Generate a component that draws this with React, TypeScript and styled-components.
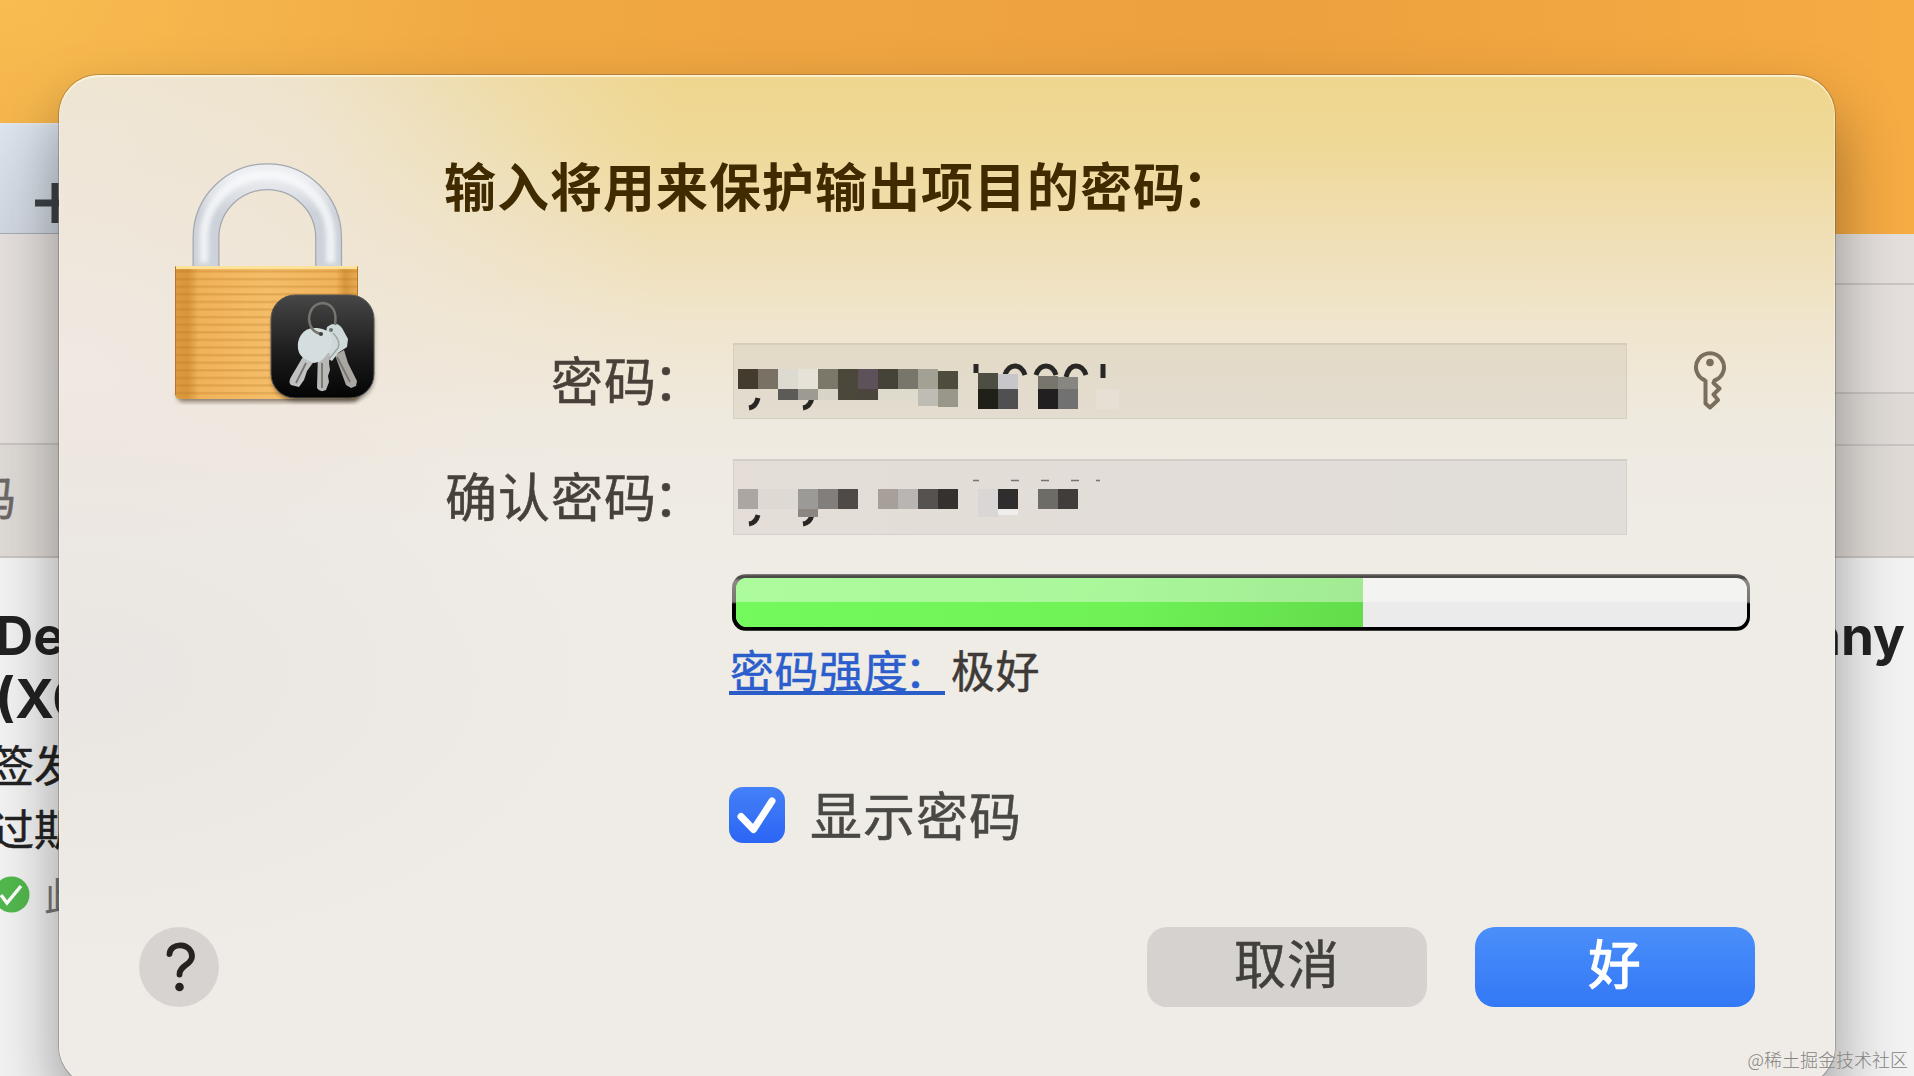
import React from 'react';
import styled, { createGlobalStyle, css } from 'styled-components';

const cjk = `"Noto Sans CJK SC", sans-serif`;

const GlobalStyle = createGlobalStyle`
  * { box-sizing: border-box; }
  body { margin: 0; overflow: hidden; font-family: ${cjk}; }
`;

const Desktop = styled.main`
  position: relative;
  width: 1914px;
  height: 1076px;
  overflow: hidden;
  background:
    radial-gradient(ellipse 500px 300px at 0 0, #f8bc50 0%, rgba(248, 188, 80, 0) 100%),
    linear-gradient(90deg, #f1ad48 0%, #f0a843 30%, #eda13f 65%, #f6ab43 100%);
`;

const BackWindow = styled.section<{ $side: 'left' | 'right' }>`
  position: absolute;
  top: ${p => (p.$side === 'left' ? 123 : 234)}px;
  bottom: 0;
  width: 200px;
  display: flex;
  flex-direction: column;
  overflow: hidden;
  ${p => (p.$side === 'left' ? css`left: 0;` : css`right: 0;`)}
`;

const TabStrip = styled.div`
  height: 111px;
  padding: 58px 0 0 35px;
  border-top: 2px solid #e3e6ea;
  border-bottom: 1px solid #a7acb2;
  background: linear-gradient(160deg, #dce4ed, #c8ced6);
`;

const ToolRow = styled.div<{ $h: number; $dark?: boolean }>`
  height: ${p => p.$h}px;
  flex: none;
  display: flex;
  align-items: center;
  border-bottom: 2px solid #cac5c2;
  background: ${p => (p.$dark ? '#dfdad6' : '#e4dfdc')};
  color: #6b6866;
  font-size: 46px;
  line-height: 1;
`;

const Clip = styled.span`
  margin: -12px 0 0 -30px;
  -webkit-text-stroke: 0.5px currentColor;
`;

const Details = styled.div`
  flex: 1;
  display: flex;
  flex-direction: column;
  background: #f2f2f2;
  color: #222;
`;

const CertName = styled.div<{ $right?: boolean }>`
  height: 63px;
  font: 700 53px/63px Inter, "Liberation Sans", sans-serif;
  white-space: nowrap;
  ${p => p.$right ? css`text-align: right; padding-right: 9px;` : css`margin-left: -5px;`}
  &:first-child { margin-top: 47px; }
`;

const CertLine = styled.div`
  height: 64px;
  margin-left: -9px;
  font-size: 43px;
  line-height: 64px;
  white-space: nowrap;
  -webkit-text-stroke: 0.5px currentColor;
`;

const Status = styled.div`
  height: 64px;
  margin: 3px 0 0 -7px;
  display: flex;
  align-items: center;
  gap: 14px;
  font-size: 38px;
  line-height: 64px;
  color: #777;
  white-space: nowrap;
`;

const Sheet = styled.section`
  position: absolute;
  left: 59px;
  top: 75px;
  width: 1776px;
  height: 1011px;
  padding: 86px 80px 79px 80px;
  display: flex;
  flex-direction: column;
  border-radius: 40px;
  background:
    radial-gradient(ellipse 560px 300px at 0 600px, rgba(232, 229, 226, 0.85) 0%, rgba(232, 229, 226, 0) 100%),
    radial-gradient(ellipse 620px 420px at 0 300px, rgba(240, 232, 226, 1) 0%, rgba(240, 232, 226, 0) 100%),
    radial-gradient(ellipse 620px 420px at 0 60px, rgba(238, 228, 207, 1) 0%, rgba(238, 228, 207, 0.85) 40%, rgba(238, 228, 207, 0) 100%),
    linear-gradient(180deg, #efd68e 0, #efd997 70px, #f0dfb5 160px, #f0e5cc 245px, #efeae0 350px, #efece6 460px, #efece7 100%);
  box-shadow:
    inset 0 2px 1px rgba(255, 250, 225, 0.75),
    inset 0 0 0 1px rgba(255, 255, 255, 0.3),
    0 0 0 1px rgba(70, 60, 50, 0.3),
    0 34px 64px rgba(0, 0, 0, 0.38);
`;

const Body = styled.div`
  flex: 1;
  display: flex;
`;

const IconColumn = styled.div`
  width: 304px;
  flex: none;
  svg { display: block; overflow: visible; }
`;

const Form = styled.div`
  flex: 1;
  display: flex;
  flex-direction: column;
`;

const Title = styled.h1`
  margin: -3px 0 0 1px;
  height: 54px;
  color: #402b00;
  font-size: 52px;
  letter-spacing: 1px;
  font-weight: 700;
  line-height: 54px;
  white-space: nowrap;
`;

const Colon = styled.span`
  margin: 0 4px 0 -4px;
`;

const Grid = styled.div`
  margin-top: 131px;
  display: grid;
  grid-template-columns: 290px 894px 124px;
  row-gap: 40px;
`;

const Label = styled.label`
  width: 267px;
  height: 76px;
  color: #48413a;
  font-size: 52px;
  letter-spacing: 1px;
  line-height: 71px;
  text-align: right;
  white-space: nowrap;
  -webkit-text-stroke: 0.5px currentColor;
`;

const Field = styled.div<{ $cool?: boolean }>`
  height: 76px;
  border: 1px solid ${p => (p.$cool ? '#d5d0cb' : '#d6cebf')};
  border-top: 2px solid ${p => (p.$cool ? '#d3ceca' : '#d6ccb8')};
  background: ${p =>
    p.$cool
      ? 'linear-gradient(90deg, #e4ddd8, #e1ddd8)'
      : 'linear-gradient(180deg, #e3dac6, #e3dcd0)'};
  svg { display: block; margin: -1px 0 0 -1px; }
`;

const KeySlot = styled.div`
  display: flex;
  align-items: center;
  justify-content: center;
  padding: 0 0 1px 41px;
`;

const Lower = styled.div`
  margin: 39px 0 0 286px;
  display: flex;
  flex-direction: column;
`;

const Meter = styled.div`
  width: 1018px;
  height: 57px;
  margin-left: 3px;
  padding: 4px 3px 4px 4px;
  border-radius: 14px;
  background: linear-gradient(180deg, #8a8784 0, #4b4a48 2px, #4b4a48 4px, #8b8885 7px, #77736f 28px, #000 30px, #000 56px, #777 57px);
`;

const Track = styled.div`
  height: 100%;
  border-radius: 11px;
  overflow: hidden;
  background: linear-gradient(180deg, #f3f3f2 0 50%, #ebebeb 50%);
`;

const Fill = styled.div`
  width: 627px;
  height: 100%;
  background:
    linear-gradient(180deg, rgba(255, 255, 255, 0.4) 0 50%, transparent 50%),
    linear-gradient(100deg, #74fa5c, #70f257 60%, #63dd4b);
`;

const Strength = styled.div`
  height: 66px;
  margin-top: 8px;
  display: flex;
  align-items: flex-start;
  color: #3d3a37;
  font-size: 44px;
  letter-spacing: 0.6px;
  line-height: 60px;
  white-space: nowrap;
  -webkit-text-stroke: 0.5px currentColor;
`;

const StrengthLink = styled.a`
  width: 216px;
  height: 56px;
  margin-right: 6px;
  padding-left: 1px;
  border-bottom: 4px solid #2b5dc9;
  color: #2b5dcd;
  overflow: visible;
`;

const CheckRow = styled.div`
  margin-top: 82px;
  height: 56px;
  display: flex;
  align-items: center;
  gap: 25px;
  color: #4a4845;
  font-size: 52px;
  letter-spacing: 1px;
  line-height: 56px;
`;

const CheckText = styled.span`
  height: 56px;
  line-height: 53px;
  -webkit-text-stroke: 0.5px currentColor;
`;

const CheckBox = styled.span`
  width: 56px;
  height: 56px;
  border-radius: 14px;
  background: linear-gradient(180deg, #4480f7, #2a66f4);
  svg { display: block; }
`;

const Footer = styled.footer`
  height: 80px;
  display: flex;
  align-items: center;
  gap: 48px;
`;

const Help = styled.button`
  width: 80px;
  height: 80px;
  margin-right: auto;
  padding: 0;
  border: 0;
  border-radius: 50%;
  background: #d7d3d0;
  svg { display: block; }
`;

const Button = styled.button<{ $primary?: boolean }>`
  width: 280px;
  height: 80px;
  padding: 0 0 10px;
  border: 0;
  border-radius: 20px;
  background: ${p => (p.$primary ? 'linear-gradient(180deg, #4a8ff9, #3378f6)' : '#d6d2cf')};
  color: ${p => (p.$primary ? '#fff' : '#42403d')};
  font: 400 52px/70px ${cjk};
  letter-spacing: 1px;
  -webkit-text-stroke: ${p => (p.$primary ? 1.4 : 0.5)}px currentColor;
`;

const Watermark = styled.div`
  position: absolute;
  right: 6px;
  bottom: 4px;
  color: #85827f;
  font-size: 18px;
  font-weight: 300;
  line-height: 26px;
  white-space: nowrap;
`;

type Cell = [number, number, number, number, string];

const firstMask: Cell[] = [
  [5, 25, 20, 20, '#443b2f'], [25, 25, 20, 20, '#797163'], [45, 25, 20, 20, '#dddad1'], [65, 25, 20, 20, '#e7e2d8'],
  [85, 25, 20, 20, '#7b7869'], [105, 25, 20, 31, '#4b473b'], [125, 25, 20, 20, '#5d525a'], [125, 45, 20, 11, '#4b453d'],
  [145, 25, 20, 20, '#454238'], [165, 25, 20, 20, '#78766a'], [185, 25, 20, 20, '#a3a194'], [205, 27, 20, 18, '#4e4c3c'],
  [45, 45, 20, 11, '#5c5b57'], [65, 45, 20, 11, '#9c9a91'], [85, 45, 20, 11, '#d8d4c8'], [145, 45, 40, 11, '#dedacc'],
  [185, 45, 20, 17, '#bfbdb3'], [205, 45, 20, 18, '#989789'],
  [245, 29, 20, 16, '#4c4d43'], [265, 30, 20, 15, '#c7c6ca'], [245, 45, 20, 20, '#202018'], [265, 45, 20, 20, '#505051'],
  [305, 32, 20, 13, '#77756c'], [325, 33, 20, 12, '#878681'], [305, 45, 20, 20, '#211f20'], [325, 45, 20, 20, '#717171'],
  [363, 45, 23, 20, '#e7dfd4'],
];

const secondMask: Cell[] = [
  [5, 29, 20, 20, '#aba6a1'], [25, 29, 40, 20, '#dedad3'], [65, 29, 20, 20, '#9b9a96'], [85, 29, 20, 20, '#827e7b'],
  [105, 29, 20, 20, '#4f4a46'], [145, 29, 20, 20, '#a69f9a'], [165, 29, 20, 20, '#b8b5b2'], [185, 29, 20, 20, '#555250'],
  [205, 29, 20, 20, '#34312f'], [245, 29, 20, 28, '#d9d6d5'], [265, 29, 20, 20, '#302d2f'], [265, 49, 20, 6, '#f0eeec'],
  [305, 29, 20, 20, '#6d6c67'], [325, 29, 20, 20, '#413d3a'], [65, 49, 20, 8, '#8c8681'],
];

const Mosaic = ({ cells, children }: { cells: Cell[]; children: React.ReactNode }) => (
  <svg width="440" height="74" viewBox="0 0 440 74">
    {children}
    <g shapeRendering="crispEdges">
      {cells.map(([x, y, w, h, fill], i) => (
        <rect key={i} x={x} y={y} width={w} height={h} fill={fill} />
      ))}
    </g>
  </svg>
);

const LockIcon = () => (
  <svg width="220" height="250" viewBox="0 0 220 250">
    <defs>
      <linearGradient id="brass" x1="0" x2="1">
        <stop offset="0" stopColor="#dc9c40" />
        <stop offset=".07" stopColor="#d8953a" />
        <stop offset=".13" stopColor="#f0b258" />
        <stop offset=".5" stopColor="#f5bd69" />
        <stop offset=".88" stopColor="#f0b45c" />
        <stop offset=".93" stopColor="#d8963d" />
        <stop offset="1" stopColor="#e8ac52" />
      </linearGradient>
      <linearGradient id="steel" x1="0" y1="0" x2="0" y2="1">
        <stop offset="0" stopColor="#eceef1" />
        <stop offset=".4" stopColor="#cdd1d8" />
        <stop offset="1" stopColor="#cdd2db" />
      </linearGradient>
      <linearGradient id="badge" x1="0" y1="0" x2="0" y2="1">
        <stop offset="0" stopColor="#474747" />
        <stop offset=".55" stopColor="#1d1d1d" />
        <stop offset="1" stopColor="#040404" />
      </linearGradient>
      <pattern id="lines" width="8" height="7.6" patternUnits="userSpaceOnUse">
        <rect width="8" height="2.2" y="3" fill="#b8741d" opacity=".3" />
      </pattern>
      <filter id="soft" x="-20%" y="-20%" width="140%" height="140%">
        <feGaussianBlur stdDeviation="2" />
      </filter>
    </defs>
    <path d="M67 108V77a61.300 61.300 0 0 1 122.600 0v31" fill="none" stroke="#a4a8b0" strokeWidth="27" />
    <path d="M67 108V77a61.300 61.300 0 0 1 122.600 0v31" fill="none" stroke="url(#steel)" strokeWidth="24.500" />
    <path d="M65 102V77a63.300 63.300 0 0 1 126.600 0v25" fill="none" stroke="#f8fafc" strokeWidth="9" opacity=".8" filter="url(#soft)" />
    <rect x="38" y="228" width="182" height="13" rx="6" fill="#3b2a15" opacity=".55" filter="url(#soft)" />
    <path d="M36 105H219V233q0 5-6 5H42q-6 0-6-5z" fill="url(#brass)" />
    <path d="M36 105H219V237H36z" fill="url(#lines)" />
    <path d="M37 106.500H218" stroke="#ffe29a" strokeWidth="3" />
    <path d="M36.500 106V234M218.500 106V234" stroke="#b5762b" />
  </svg>
);

const KeysBadge = () => (
  <svg width="112" height="112" viewBox="0 0 112 112">
    <rect x="5" y="9" width="102" height="101" rx="24" fill="#000" opacity=".4" filter="url(#soft)" />
    <rect x="4" y="4" width="103" height="103" rx="24" fill="url(#badge)" stroke="#565656" strokeWidth="1" />
    <path d="M68 64l9-5 4 13 9 18-1 5-5 2-5-3z" fill="#aaa7a2" />
    <path d="M60 36q9-7 15 1l6 11-1 8-9 6-6 8-10-6z" fill="#cfd9d9" />
    <path d="M51 62h12l-1 10 1 7-2 6 1 6-3 8q-6 3-9-2z" fill="#b8b9b7" />
    <path d="M37 64l11 5-8 11-3 9-5 7-8-2q-3-3 0-8z" fill="#bfc2c1" />
    <path d="M34 44q5-8 16-7 14 1 15 12 0 9-8 18-3 4-10 5l-5-2q-10-4-11-12-1-8 3-14z" fill="#d5dede" />
    <path d="M66 42q8 8 5 15l-9 11" fill="none" stroke="#a0a7a5" strokeWidth="1.500" />
    <path d="M39 72l-10 20M55 72v25M70 66l13 25" stroke="#77736f" strokeWidth="1.800" />
    <path d="M68 34q3-20-12-22-13 1-14 16 1 13 12 15" fill="none" stroke="#77736d" strokeWidth="2.500" />
    <circle cx="54" cy="43" r="2" fill="#3d3d3d" />
    <circle cx="64" cy="39" r="2" fill="#66706e" />
  </svg>
);

const IconStack = styled.div`
  width: 230px;
  height: 260px;
  display: grid;
  > svg { grid-area: 1 / 1; }
  > svg:last-child { margin: 130px 0 0 128px; }
`;

export default function App() {
  return (
    <Desktop>
      <GlobalStyle />
      <BackWindow $side="left">
        <TabStrip>
          <svg width="40" height="40" viewBox="0 0 40 40">
            <path d="M0 20H40M20 0V40" stroke="#3d4248" strokeWidth="7" />
          </svg>
        </TabStrip>
        <ToolRow $h={211} />
        <ToolRow $h={113} $dark><Clip>码</Clip></ToolRow>
        <Details>
          <CertName>De</CertName>
          <CertName>(X0</CertName>
          <CertLine>签发</CertLine>
          <CertLine>过期</CertLine>
          <Status>
            <svg width="37" height="37" viewBox="0 0 37 37">
              <circle cx="18.500" cy="18.500" r="18" fill="#52b84d" />
              <path d="M8 19l6 8L28 10" fill="none" stroke="#fff" strokeWidth="3.500" />
            </svg>
            此
          </Status>
        </Details>
      </BackWindow>
      <BackWindow $side="right">
        <ToolRow $h={51} />
        <ToolRow $h={109} />
        <ToolRow $h={52} $dark />
        <ToolRow $h={112} $dark />
        <Details><CertName $right>any</CertName></Details>
      </BackWindow>

      <Sheet>
        <Body>
          <IconColumn>
            <IconStack><LockIcon /><KeysBadge /></IconStack>
          </IconColumn>
          <Form>
            <Title>输入将用来保护输出项目的密码<Colon>：</Colon></Title>
            <Grid>
              <Label>密码<Colon>：</Colon></Label>
              <Field>
                <Mosaic cells={firstMask}>
                  <g fill="none" stroke="#292725" strokeWidth="5">
                    <path d="M16 64q7-1 9-10M70 64q7-1 9-10M243 20v9M370 20v14" />
                    <path d="M272 31q3-9 10-9t10 9M303 31q3-9 10-9t10 9M333 33q3-11 10-11t10 9" />
                  </g>
                </Mosaic>
              </Field>
              <KeySlot>
                <svg width="34" height="62" viewBox="0 0 34 62" fill="none" stroke="#7a6f5d" strokeWidth="4" strokeLinejoin="round">
                  <path d="M12.500 30.500A14 14 0 1 1 21.500 30.500L20.500 33L26.500 38.500L20.500 44.500L25 50L17 57.500L12.500 53.500V29.500" />
                  <circle cx="17" cy="12.500" r="3.800" fill="#7a6f5d" stroke="none" />
                </svg>
              </KeySlot>
              <Label>确认密码<Colon>：</Colon></Label>
              <Field $cool>
                <Mosaic cells={secondMask}>
                  <path d="M16 64q7-1 9-9M70 64q7-1 9-9" fill="none" stroke="#292725" strokeWidth="5" />
                  <path d="M240 20.500h6M278 20.500h8M308 20.500h8M338 20.500h8M363 20.500h4" stroke="#77736f" strokeWidth="1.500" />
                </Mosaic>
              </Field>
            </Grid>
            <Lower>
              <Meter><Track><Fill /></Track></Meter>
              <Strength><StrengthLink>密码强度<Colon>：</Colon></StrengthLink><span>极好</span></Strength>
              <CheckRow>
                <CheckBox>
                  <svg width="56" height="56" viewBox="0 0 56 56">
                    <path d="M12 29.500L24.500 42.500L43 14" fill="none" stroke="#fff" strokeWidth="7" strokeLinecap="round" strokeLinejoin="round" />
                  </svg>
                </CheckBox>
                <CheckText>显示密码</CheckText>
              </CheckRow>
            </Lower>
          </Form>
        </Body>
        <Footer>
          <Help aria-label="帮助">
            <svg width="80" height="80" viewBox="0 0 80 80">
              <path d="M30.500 27C31 15 53 15 53 29.500C53 38 40.500 38 40.500 47.500" fill="none" stroke="#27221f" strokeWidth="5.800" strokeLinecap="round" />
              <circle cx="40.500" cy="60" r="4.300" fill="#27221f" />
            </svg>
          </Help>
          <Button>取消</Button>
          <Button $primary>好</Button>
        </Footer>
      </Sheet>
      <Watermark>@稀土掘金技术社区</Watermark>
    </Desktop>
  );
}
